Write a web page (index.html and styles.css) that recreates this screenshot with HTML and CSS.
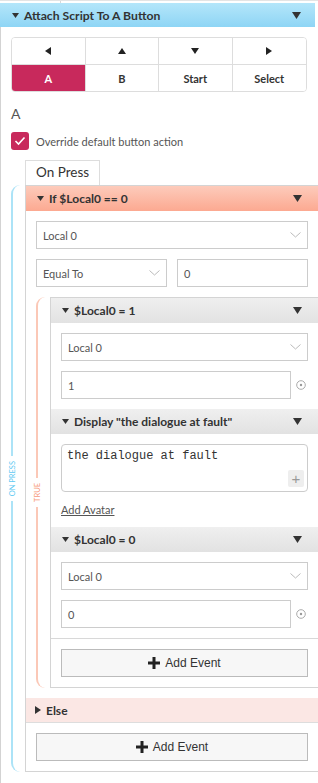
FILE: index.html
```html
<!DOCTYPE html>
<html lang="en">
<head>
    <meta charset="UTF-8">
    <meta name="viewport" content="width=device-width, initial-scale=1.0">
    <title>Attach Script To A Button</title>
    <link rel="stylesheet" href="styles.css">
</head>
<body>
    <div class="top-strip"><span class="top-edge"></span></div>

    <div class="panel">
        <div class="panel-header">
            <svg class="caret" width="7" height="5" viewBox="0 0 7 5"><polygon points="0,0 7,0 3.5,5"/></svg>
            <span class="panel-title">Attach Script To A Button</span>
            <svg class="menu-caret" width="9" height="7" viewBox="0 0 9 7"><polygon points="0,0 9,0 4.5,7"/></svg>
        </div>

        <div class="panel-body">
            <!-- Button picker -->
            <div class="button-grid">
                <button class="grid-btn"><svg width="6" height="8" viewBox="0 0 6 8"><polygon points="6,0 6,8 0,4"/></svg></button>
                <button class="grid-btn"><svg width="8" height="6" viewBox="0 0 8 6"><polygon points="0,6 8,6 4,0"/></svg></button>
                <button class="grid-btn"><svg width="8" height="6" viewBox="0 0 8 6"><polygon points="0,0 8,0 4,6"/></svg></button>
                <button class="grid-btn"><svg width="6" height="8" viewBox="0 0 6 8"><polygon points="0,0 0,8 6,4"/></svg></button>
                <button class="grid-btn active">A</button>
                <button class="grid-btn">B</button>
                <button class="grid-btn">Start</button>
                <button class="grid-btn">Select</button>
            </div>

            <div class="selected-name">A</div>

            <label class="check-row">
                <span class="checkbox">
                    <svg width="12" height="10" viewBox="0 0 12 10"><polyline points="1.5,5 4.5,8 10.5,1.5"/></svg>
                </span>
                Override default button action
            </label>

            <div class="tabs"><div class="tab">On Press</div></div>

            <!-- On press script -->
            <div class="branch branch-press">
                <div class="branch-line">
                    <span class="line-top"></span>
                    <span class="branch-label">ON PRESS</span>
                    <span class="line-bottom"></span>
                </div>

                <div class="event-box">
                    <div class="event-header header-if">
                        <svg class="caret" width="7" height="5" viewBox="0 0 7 5"><polygon points="0,0 7,0 3.5,5"/></svg>
                        <span>If $Local0 == 0</span>
                        <svg class="menu-caret" width="9" height="7" viewBox="0 0 9 7"><polygon points="0,0 9,0 4.5,7"/></svg>
                    </div>
                    <div class="event-body">
                        <div class="field select">Local 0<svg class="chevron" width="11" height="6" viewBox="0 0 11 6"><polyline points="0.5,0.5 5.5,5 10.5,0.5"/></svg></div>
                        <div class="field-row">
                            <div class="field select">Equal To<svg class="chevron" width="11" height="6" viewBox="0 0 11 6"><polyline points="0.5,0.5 5.5,5 10.5,0.5"/></svg></div>
                            <div class="field">0</div>
                        </div>

                        <div class="branch branch-true">
                            <div class="branch-line">
                                <span class="line-top"></span>
                                <span class="branch-label">TRUE</span>
                                <span class="line-bottom"></span>
                            </div>

                            <div class="event-box">
                                <div class="event-header header-plain">
                                    <svg class="caret" width="7" height="5" viewBox="0 0 7 5"><polygon points="0,0 7,0 3.5,5"/></svg>
                                    <span>$Local0 = 1</span>
                                    <svg class="menu-caret" width="9" height="7" viewBox="0 0 9 7"><polygon points="0,0 9,0 4.5,7"/></svg>
                                </div>
                                <div class="event-body">
                                    <div class="field select">Local 0<svg class="chevron" width="11" height="6" viewBox="0 0 11 6"><polyline points="0.5,0.5 5.5,5 10.5,0.5"/></svg></div>
                                    <div class="value-row">
                                        <div class="field">1</div>
                                        <span class="var-toggle"><svg width="10" height="10" viewBox="0 0 10 10"><circle cx="5" cy="5" r="4.3" fill="none"/><circle class="dot" cx="5" cy="5" r="1.2"/></svg></span>
                                    </div>
                                </div>

                                <div class="event-header header-plain">
                                    <svg class="caret" width="7" height="5" viewBox="0 0 7 5"><polygon points="0,0 7,0 3.5,5"/></svg>
                                    <span>Display "the dialogue at fault"</span>
                                    <svg class="menu-caret" width="9" height="7" viewBox="0 0 9 7"><polygon points="0,0 9,0 4.5,7"/></svg>
                                </div>
                                <div class="event-body">
                                    <div class="text-area">
                                        <span>the dialogue at fault</span>
                                        <span class="area-plus">+</span>
                                    </div>
                                    <a class="avatar-link" href="#">Add Avatar</a>
                                </div>

                                <div class="event-header header-plain">
                                    <svg class="caret" width="7" height="5" viewBox="0 0 7 5"><polygon points="0,0 7,0 3.5,5"/></svg>
                                    <span>$Local0 = 0</span>
                                    <svg class="menu-caret" width="9" height="7" viewBox="0 0 9 7"><polygon points="0,0 9,0 4.5,7"/></svg>
                                </div>
                                <div class="event-body">
                                    <div class="field select">Local 0<svg class="chevron" width="11" height="6" viewBox="0 0 11 6"><polyline points="0.5,0.5 5.5,5 10.5,0.5"/></svg></div>
                                    <div class="value-row">
                                        <div class="field">0</div>
                                        <span class="var-toggle"><svg width="10" height="10" viewBox="0 0 10 10"><circle cx="5" cy="5" r="4.3" fill="none"/><circle class="dot" cx="5" cy="5" r="1.2"/></svg></span>
                                    </div>
                                </div>

                                <div class="add-row separated">
                                    <button class="add-event"><svg width="12" height="12" viewBox="0 0 12 12"><rect x="4.5" y="0" width="3" height="12"/><rect x="0" y="4.5" width="12" height="3"/></svg>Add Event</button>
                                </div>
                            </div>
                        </div>
                    </div>

                    <div class="event-header header-else">
                        <svg class="caret" width="6" height="8" viewBox="0 0 6 8"><polygon points="0,0 0,8 6,4"/></svg>
                        <span>Else</span>
                    </div>
                    <div class="add-row">
                        <button class="add-event"><svg width="12" height="12" viewBox="0 0 12 12"><rect x="4.5" y="0" width="3" height="12"/><rect x="0" y="4.5" width="12" height="3"/></svg>Add Event</button>
                    </div>
                </div>
            </div>
        </div>
    </div>
</body>
</html>
```

FILE: styles.css
```css
body {
    margin: 0;
    font-family: Lato, "Open Sans", sans-serif;
    color: #333;
    background-color: #fff;
    overflow: hidden;
}

.top-strip {
    height: 3px;
    box-sizing: border-box;
    border-top: 1px solid #e4e4e4;
}

.top-edge {
    display: block;
    width: 1px;
    height: 2px;
    margin-left: 60px;
    background-color: #d8d8d8;
}

.panel {
    width: 318px;
    overflow: hidden;
}

.panel-header {
    display: flex;
    align-items: center;
    width: 315px;
    height: 24px;
    box-sizing: border-box;
    padding: 0 14px 0 12px;
    background: linear-gradient(#b4e6fa, #8ed5f5);
    font-size: 12.2px;
    font-weight: bold;
    color: #333;
}

.caret {
    flex: none;
    margin-right: 5px;
    fill: #333;
}

.menu-caret {
    flex: none;
    margin-left: auto;
    fill: #333;
}

.panel-body {
    border-left: 1px solid #d3d3d3;
    padding: 10px 11px 14px 10px;
}

/* button picker */

.button-grid {
    display: grid;
    grid-template-columns: repeat(4, 1fr);
    border: 1px solid #ddd;
    border-radius: 4px;
    overflow: hidden;
}

.grid-btn {
    box-sizing: border-box;
    height: 26px;
    border: none;
    border-right: 1px solid #ddd;
    background-color: #fff;
    font-family: inherit;
    font-size: 11px;
    font-weight: bold;
    color: #333;
    padding: 0;
    display: flex;
    align-items: center;
    justify-content: center;
    fill: #222;
}

.grid-btn:nth-child(-n+4) {
    height: 27px;
    border-bottom: 1px solid #ddd;
}

.grid-btn:nth-child(4n) {
    border-right: none;
}

.grid-btn.active {
    background-color: #c8295c;
    color: #fff;
}

.selected-name {
    margin-top: 13px;
    font-size: 14px;
    line-height: 18px;
    color: #555;
}

.check-row {
    display: flex;
    align-items: center;
    gap: 7px;
    margin-top: 9px;
    font-size: 11px;
    color: #555;
}

.checkbox {
    width: 18px;
    height: 18px;
    border-radius: 3px;
    background-color: #c8295c;
    display: flex;
    align-items: center;
    justify-content: center;
}

.checkbox svg {
    fill: none;
    stroke: #fff;
    stroke-width: 1.6;
}

.tabs {
    display: flex;
    margin-top: 10px;
    padding-left: 14px;
}

.tab {
    height: 25px;
    box-sizing: border-box;
    padding: 0 10px;
    border: 1px solid #ddd;
    border-bottom: none;
    font-size: 13.5px;
    line-height: 23px;
    color: #333;
}

/* script branches */

.branch {
    display: flex;
}

.branch-line {
    flex: none;
    width: 14px;
    display: flex;
    flex-direction: column;
}

.line-top,
.line-bottom {
    flex: 1;
    width: 10px;
    box-sizing: border-box;
    border-left: 2px solid #ace3f7;
}

.line-top {
    border-top-left-radius: 9px;
}

.line-bottom {
    border-bottom-left-radius: 9px;
}

.branch-label {
    writing-mode: vertical-rl;
    transform: rotate(180deg);
    margin: 5px 0 5px -3px;
    font-size: 7.5px;
    line-height: 9px;
    color: #5ec9f2;
}

.branch-true .line-top,
.branch-true .line-bottom {
    border-left-color: #fbc8b7;
}

.branch-true .branch-label {
    color: #f7997a;
}

.event-box {
    flex: 1;
    min-width: 0;
    margin-right: -12px;
    border: 1px solid #d4d4d4;
}

.branch-true {
    margin-right: -11px;
}

.branch-true .event-box {
    margin-right: 0;
}

.event-header {
    display: flex;
    align-items: center;
    height: 25px;
    padding: 0 16px 0 11px;
    font-size: 12px;
    font-weight: bold;
    color: #333;
}

.header-if {
    background: linear-gradient(#fdcbbb, #fca991);
}

.header-plain {
    background: linear-gradient(#efefef, #e2e2e2);
}

.header-else {
    height: 24px;
    padding-left: 9px;
    background-color: #fbe7e4;
    border-bottom: 1px solid #ddd;
}

.event-body {
    display: flex;
    flex-direction: column;
    gap: 10px;
    padding: 10px;
}

.field {
    height: 28px;
    box-sizing: border-box;
    display: flex;
    align-items: center;
    padding: 0 6px;
    border: 1px solid #ccc;
    background-color: #fff;
    font-size: 11px;
    color: #555;
}

.chevron {
    margin-left: auto;
    fill: none;
    stroke: #bbb;
    stroke-width: 1;
}

.field-row {
    display: flex;
    gap: 10px;
}

.field-row .field {
    flex: 1;
}

.value-row {
    display: flex;
    align-items: center;
}

.value-row .field {
    flex: 1;
}

.var-toggle {
    width: 17px;
    display: flex;
    justify-content: flex-end;
    padding-right: 2px;
    box-sizing: border-box;
}

.var-toggle svg {
    stroke: #aaa;
    stroke-width: 1;
}

.var-toggle .dot {
    fill: #999;
    stroke: none;
}

.text-area {
    height: 48px;
    box-sizing: border-box;
    display: flex;
    flex-direction: column;
    padding: 4px 3px 4px 5px;
    border: 1px solid #ccc;
    border-radius: 4px;
    font-family: "Liberation Mono", monospace;
    font-size: 12px;
    line-height: 15px;
    color: #333;
}

.area-plus {
    margin-top: auto;
    align-self: flex-end;
    width: 16px;
    height: 17px;
    border-radius: 2px;
    background-color: #eee;
    font-family: "Liberation Sans", sans-serif;
    font-size: 15px;
    line-height: 17px;
    text-align: center;
    color: #999;
}

.avatar-link {
    align-self: flex-start;
    font-size: 11px;
    line-height: 15px;
    color: #555;
    text-decoration: underline;
}

.add-row {
    padding: 10px;
}

.add-row.separated {
    border-top: 1px solid #d8d8d8;
}

.add-event {
    width: 100%;
    height: 28px;
    display: flex;
    align-items: center;
    justify-content: center;
    gap: 5px;
    border: 1px solid #bbb;
    background-color: #f7f7f7;
    font-family: "Liberation Sans", Arial, sans-serif;
    font-size: 12px;
    color: #333;
    fill: #222;
}
```
